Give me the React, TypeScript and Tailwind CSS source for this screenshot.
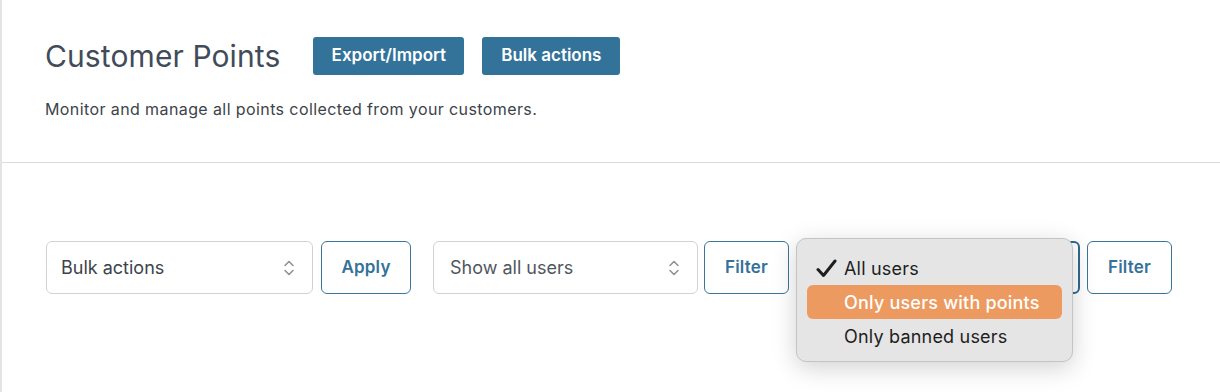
import React from "react";

function Chevrons() {
  return (
    <svg width="14" height="20" viewBox="0 0 14 20" fill="none" stroke="#8c8f94" strokeWidth="1.5" strokeLinecap="round" strokeLinejoin="round">
      <path d="M3 7.5 L7 3.5 L11 7.5" />
      <path d="M3 12.5 L7 16.5 L11 12.5" />
    </svg>
  );
}

function Select({ label, textColor, width, pl }: { label: string; textColor: string; width: string; pl: string }) {
  return (
    <div className={`flex h-[53px] ${width} items-center justify-between rounded-[6px] border border-[#d0d3d6] bg-white ${pl} pr-[16px]`}>
      <span className={`text-[18px] ${textColor}`}>{label}</span>
      <Chevrons />
    </div>
  );
}

function OutlineButton({ label, width }: { label: string; width: string }) {
  return (
    <button className={`flex h-[53px] ${width} items-center justify-center rounded-[6px] border border-[#3a7699] bg-white text-[17px] font-semibold tracking-[0.2px] text-[#34729a]`}>
      {label}
    </button>
  );
}

export default function App() {
  return (
    <div
      className="min-h-[392px] w-[1220px] border-l-2 border-[#e4e4e4] bg-white"
      style={{ fontFamily: "Inter, 'Noto Sans', sans-serif" }}
    >
      <div className="h-[163px] border-b border-[#dcdcde] pl-[43px] pt-[37px]">
        <div className="flex items-center">
          <h1 className="mr-[33px] text-[30px] font-normal leading-[38px] tracking-[0.1px] text-[#414b5a]">Customer Points</h1>
          <button className="flex h-[38px] w-[151px] items-center justify-center rounded-[3px] bg-[#33739a] text-[17px] font-semibold text-white">
            Export/Import
          </button>
          <button className="ml-[18px] flex h-[38px] w-[138px] items-center justify-center rounded-[3px] bg-[#33739a] text-[17px] font-semibold text-white">
            Bulk actions
          </button>
        </div>
        <p className="mt-[23px] text-[16px] leading-[22px] tracking-[0.4px] text-[#3c434a]">
          Monitor and manage all points collected from your customers.
        </p>
      </div>

      <div className="flex items-center pl-[44px] pt-[78px]">
        <Select label="Bulk actions" textColor="text-[#3c434a]" width="w-[267px]" pl="pl-[14px]" />
        <div className="ml-[8px]">
          <OutlineButton label="Apply" width="w-[90px]" />
        </div>
        <div className="ml-[22px]">
          <Select label="Show all users" textColor="text-[#50575e]" width="w-[265px]" pl="pl-[16px]" />
        </div>
        <div className="ml-[6px]">
          <OutlineButton label="Filter" width="w-[85px]" />
        </div>
        <div className="relative ml-[22px]">
          <div className="flex h-[53px] w-[269px] items-center justify-end rounded-[6px] border-2 border-[#2f6a8f] bg-white pr-[16px]">
            <Chevrons />
          </div>
          <div className="absolute left-[-15px] top-[-3px] w-[277px] rounded-[10px] border border-[#c4c4c4] bg-[#e5e5e5] px-[10px] pb-[8px] pt-[12px] shadow-[0_6px_24px_rgba(0,0,0,0.18)]">
            <div className="flex h-[34px] items-center text-[18px] tracking-[0.2px] text-[#1e1e1e]">
              <svg className="ml-[9px] mr-[7px] shrink-0" width="21" height="19" viewBox="0 0 21 19" fill="none">
                <path d="M2 10.5 L7.5 16.5 L19 2" stroke="#1e1e1e" strokeWidth="3" strokeLinecap="round" strokeLinejoin="round" />
              </svg>
              <span>All users</span>
            </div>
            <div className="flex h-[34px] items-center rounded-[6px] bg-[#ec9a5f] pl-[37px] text-[18px] font-medium tracking-[0.2px] text-white">
              Only users with points
            </div>
            <div className="flex h-[34px] items-center pl-[37px] text-[18px] tracking-[0.2px] text-[#1e1e1e]">
              Only banned users
            </div>
          </div>
        </div>
        <div className="ml-[7px]">
          <OutlineButton label="Filter" width="w-[85px]" />
        </div>
      </div>
    </div>
  );
}
